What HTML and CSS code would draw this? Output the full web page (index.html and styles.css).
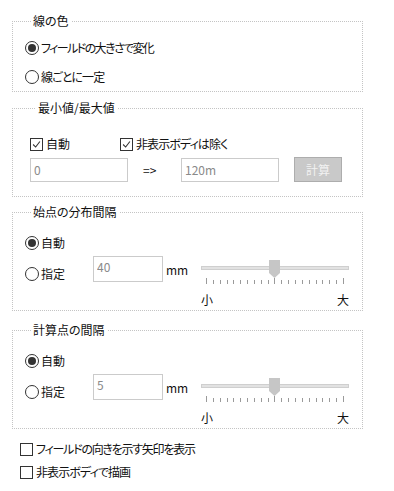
FILE: index.html
```html
<!DOCTYPE html>
<html lang="ja">
<head>
<meta charset="utf-8">
<link rel="stylesheet" href="styles.css">
</head>
<body>
<div class="panel">
  <fieldset class="group g-color">
    <legend>線の色</legend>
    <label class="opt"><span class="radio on"></span><span class="tight-2">フィールドの大きさで変化</span></label>
    <label class="opt"><span class="radio"></span><span class="tight-1">線ごとに一定</span></label>
  </fieldset>

  <fieldset class="group g-range">
    <legend>最小値/最大値</legend>
    <div class="checks">
      <label class="opt chk-auto"><span class="check on"><svg viewBox="0 0 13 13"><polyline points="2.5,6.5 5.5,9.5 10.5,3" /></svg></span>自動</label>
      <label class="opt"><span class="check on"><svg viewBox="0 0 13 13"><polyline points="2.5,6.5 5.5,9.5 10.5,3" /></svg></span><span class="tight-1">非表示ボディは除く</span></label>
    </div>
    <div class="range-row">
      <input class="field wide" type="text" value="0" readonly>
      <span class="arrow">=&gt;</span>
      <input class="field wide" type="text" value="120m" readonly>
      <button class="calc" type="button" disabled>計算</button>
    </div>
  </fieldset>

  <fieldset class="group g-interval">
    <legend>始点の分布間隔</legend>
    <label class="opt"><span class="radio on"></span>自動</label>
    <div class="spec-row">
      <label class="opt spec-label"><span class="radio"></span>指定</label>
      <input class="field short" type="text" value="40" readonly>
      <span class="unit">mm</span>
      <div class="slider">
        <div class="track-area">
          <div class="track"></div>
          <svg class="thumb" viewBox="0 0 11 18"><polygon points="0,0 11,0 11,13 5.5,18 0,13" /></svg>
        </div>
        <div class="ticks"><i class="tall"></i><i></i><i></i><i></i><i></i><i></i><i></i><i></i><i></i><i></i><i class="tall"></i><i></i><i></i><i></i><i></i><i></i><i></i><i></i><i></i><i></i><i class="tall"></i></div>
        <div class="scale"><span>小</span><span>大</span></div>
      </div>
    </div>
  </fieldset>

  <fieldset class="group g-interval g-last">
    <legend>計算点の間隔</legend>
    <label class="opt"><span class="radio on"></span>自動</label>
    <div class="spec-row">
      <label class="opt spec-label"><span class="radio"></span>指定</label>
      <input class="field short" type="text" value="5" readonly>
      <span class="unit">mm</span>
      <div class="slider">
        <div class="track-area">
          <div class="track"></div>
          <svg class="thumb" viewBox="0 0 11 18"><polygon points="0,0 11,0 11,13 5.5,18 0,13" /></svg>
        </div>
        <div class="ticks"><i class="tall"></i><i></i><i></i><i></i><i></i><i></i><i></i><i></i><i></i><i></i><i class="tall"></i><i></i><i></i><i></i><i></i><i></i><i></i><i></i><i></i><i></i><i class="tall"></i></div>
        <div class="scale"><span>小</span><span>大</span></div>
      </div>
    </div>
  </fieldset>

  <div class="bottom-checks">
    <label class="opt"><span class="check"></span><span class="tight-15">フィールドの向きを示す矢印を表示</span></label>
    <label class="opt"><span class="check"></span><span class="tight-1">非表示ボディで描画</span></label>
  </div>
</div>
</body>
</html>
```

FILE: styles.css
```css
* { box-sizing: border-box; }

html, body {
  margin: 0;
  padding: 0;
  background: #ffffff;
}

body {
  font-family: "Noto Sans CJK JP", "Noto Sans", sans-serif;
  font-size: 12px;
  line-height: 20px;
  color: #111111;
  font-feature-settings: "palt";
}

.panel {
  width: 394px;
  height: 491px;
  padding: 13px 0 0 12px;
}

.group {
  width: 351px;
  margin: 0;
  border: 1px dotted #c4c4c4;
  min-width: 0;
  display: flex;
  flex-direction: column;
}

.group legend {
  margin-left: 6px;
  padding: 0 2px;
  line-height: 16px;
  height: 16px;
}

.g-color {
  padding: 9px 0 4px 12px;
  gap: 9px;
}

.g-range {
  margin-top: 8px;
  padding: 18px 0 14px 17px;
  gap: 3px;
}

.g-interval {
  margin-top: 7px;
  padding: 13px 0 2px 12px;
  gap: 3px;
}

.g-last {
  margin-top: 11px;
}

.opt {
  display: flex;
  align-items: center;
  height: 20px;
  white-space: nowrap;
}

.tight-1 { letter-spacing: -0.9px; }
.tight-15 { letter-spacing: -1.25px; }
.tight-2 { letter-spacing: -1.6px; }

.radio {
  width: 14px;
  height: 14px;
  border: 1px solid #333;
  border-radius: 50%;
  margin-right: 2px;
  display: flex;
  align-items: center;
  justify-content: center;
  flex: none;
}

.radio.on::after {
  content: "";
  width: 8px;
  height: 8px;
  border-radius: 50%;
  background: #333;
}

.check {
  width: 13px;
  height: 13px;
  border: 1px solid #333;
  margin-right: 3px;
  flex: none;
  display: flex;
}

.check svg {
  width: 11px;
  height: 11px;
}

.check polyline {
  fill: none;
  stroke: #333;
  stroke-width: 1.3;
}

.checks {
  display: flex;
}

.chk-auto {
  width: 90px;
}

.range-row {
  display: flex;
  align-items: center;
}

.field {
  font-family: "Noto Sans CJK JP", "Noto Sans", sans-serif;
  font-size: 12px;
  color: #8a8a8a;
  border: 1px solid #cbcbcb;
  background: #fff;
  outline: none;
  margin: 0;
}

.wide {
  width: 98px;
  height: 24px;
  padding: 0 0 0 3px;
}

.arrow {
  width: 53px;
  padding-left: 15px;
  color: #111111;
}

.calc {
  width: 48px;
  height: 25px;
  margin: 0 0 0 15px;
  padding: 0;
  border: 1px solid #adadad;
  background: #c9c9c9;
  color: #f2f2f2;
  font-family: "Noto Sans CJK JP", "Noto Sans", sans-serif;
  font-size: 12px;
}

.spec-row {
  display: flex;
  align-items: flex-start;
}

.spec-label {
  width: 68px;
  margin-top: 8px;
}

.short {
  width: 70px;
  height: 26px;
  padding: 2px 0 8px 3px;
  line-height: 14px;
}

.unit {
  margin: 4px 0 0 3px;
  width: 35px;
  color: #111111;
}

.slider {
  width: 148px;
  margin-top: 4px;
  display: flex;
  flex-direction: column;
}

.track-area {
  position: relative;
  height: 18px;
}

.track {
  margin-top: 6px;
  height: 4px;
  background: #e2e2e2;
  border: 1px solid #cfcfcf;
}

.thumb {
  position: absolute;
  left: 68px;
  top: 0;
  width: 11px;
  height: 18px;
}

.thumb polygon {
  fill: #c6c6c6;
}

.ticks {
  display: flex;
  justify-content: space-between;
  align-items: flex-end;
  width: 138px;
  height: 6px;
  margin: 0 0 0 5px;
}

.ticks i {
  width: 1px;
  height: 4px;
  background: #9a9a9a;
}

.ticks i.tall {
  height: 6px;
}

.scale {
  display: flex;
  justify-content: space-between;
  margin-top: 8px;
  line-height: 16px;
}

.bottom-checks {
  display: flex;
  flex-direction: column;
  gap: 3px;
  margin: 10px 0 0 8px;
}
```
